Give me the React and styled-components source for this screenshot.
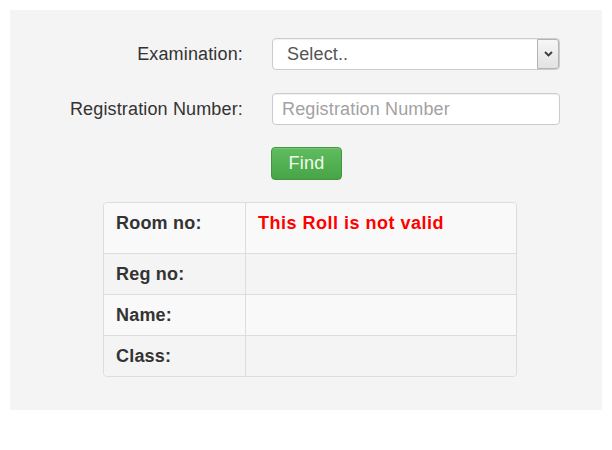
import React from "react";
import styled, { createGlobalStyle } from "styled-components";

const Global = createGlobalStyle`
  html, body { margin: 0; padding: 0; background: #fff; }
  body { font-family: "Liberation Sans", Arial, sans-serif; }
`;

const Page = styled.div`
  padding: 10px 10px 40px 10px;
  width: 612px;
  box-sizing: border-box;
`;

const Panel = styled.div`
  background: #f4f4f4;
  width: 592px;
  height: 400px;
  box-sizing: border-box;
  padding-top: 28px;
`;

const Form = styled.div`
  display: grid;
  grid-template-columns: 233px 288px;
  column-gap: 29px;
  row-gap: 23px;
  align-items: center;
`;

const Label = styled.label`
  text-align: right;
  font-size: 18px;
  letter-spacing: 0.15px;
  color: #333;
`;

const Control = styled.div`
  height: 32px;
  box-sizing: border-box;
  border: 1px solid #ccc;
  border-radius: 4px;
  background: #fff;
  display: flex;
  align-items: center;
  font-size: 18px;
  letter-spacing: 0.15px;
  box-shadow: inset 0 1px 1px rgba(0,0,0,0.06);
`;

const SelectValue = styled.span`
  flex: 1;
  padding-left: 14px;
  color: #555;
`;

const ArrowBox = styled.span`
  width: 22px;
  height: 30px;
  box-sizing: border-box;
  border: 1px solid #b4b4b4;
  border-radius: 0 3px 3px 0;
  background: linear-gradient(#f6f6f6, #e2e2e2);
  display: flex;
  align-items: center;
  justify-content: center;
`;

const Placeholder = styled.span`
  padding-left: 9px;
  color: #a2a2a2;
`;

const Button = styled.button`
  grid-column: 2;
  justify-self: start;
  width: 71px;
  height: 33px;
  margin-left: -1px;
  margin-top: -1px;
  border: 1px solid #40953f;
  border-radius: 4px;
  background: linear-gradient(#60bd5f, #47a447);
  color: #f2faea;
  font-family: "Liberation Sans", Arial, sans-serif;
  font-size: 18px;
  letter-spacing: 0.2px;
  padding: 0;
  box-shadow: inset 0 1px 0 rgba(255,255,255,0.15);
`;

const TableWrap = styled.div`
  margin: 22px 0 0 93px;
  width: 412px;
  border: 1px solid #ddd;
  border-radius: 4px;
  overflow: hidden;
`;

const Row = styled.div`
  display: grid;
  grid-template-columns: 141px 1fr;
  background: ${(p) => (p.$odd ? "#f9f9f9" : "#f4f4f4")};
  & + & { border-top: 1px solid #ddd; }
`;

const Cell = styled.div`
  padding: 10px 12px;
  line-height: 20px;
  font-size: 18px;
  letter-spacing: 0.2px;
  font-weight: bold;
  color: #333;
  & + & { border-left: 1px solid #ddd; padding-left: 12px; }
`;

const ErrorText = styled.div`
  color: #f00;
  font-weight: bold;
  margin-bottom: 10px;
  letter-spacing: 0.5px;
`;

const rows = [
  { label: "Room no:", value: <ErrorText>This Roll is not valid</ErrorText> },
  { label: "Reg no:" },
  { label: "Name:" },
  { label: "Class:" },
];

export default function App() {
  return (
    <>
      <Global />
      <Page>
        <Panel>
          <Form>
            <Label>Examination:</Label>
            <Control>
              <SelectValue>Select..</SelectValue>
              <ArrowBox>
                <svg width="9" height="6" viewBox="0 0 9 6">
                  <path d="M1 1 L4.5 4.5 L8 1" fill="none" stroke="#3a3a3a" strokeWidth="1.8" />
                </svg>
              </ArrowBox>
            </Control>
            <Label>Registration Number:</Label>
            <Control>
              <Placeholder>Registration Number</Placeholder>
            </Control>
            <Button>Find</Button>
          </Form>
          <TableWrap>
            {rows.map((r, i) => (
              <Row key={r.label} $odd={i % 2 === 0}>
                <Cell>{r.label}</Cell>
                <Cell>{r.value}</Cell>
              </Row>
            ))}
          </TableWrap>
        </Panel>
      </Page>
    </>
  );
}
